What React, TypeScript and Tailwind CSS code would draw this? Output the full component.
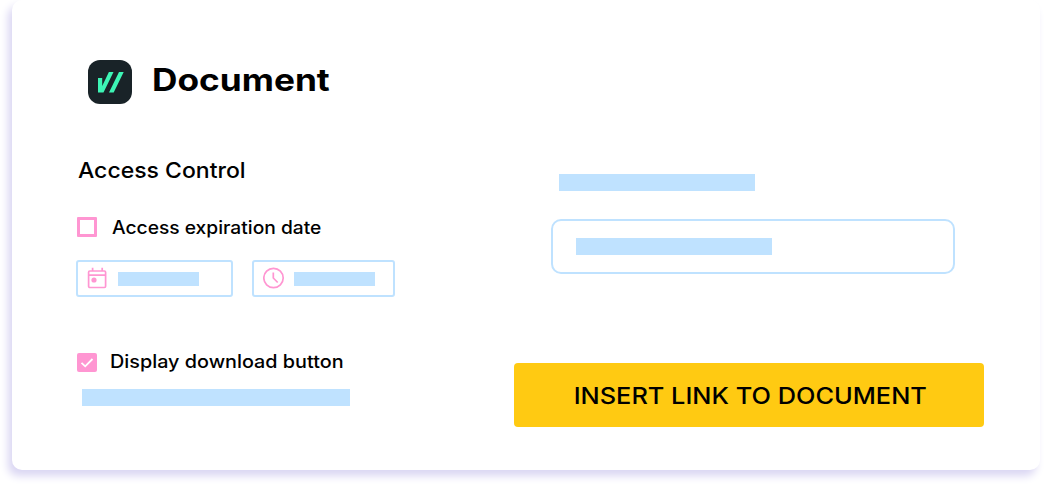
import React from 'react';

interface PlaceholderProps {
  className?: string;
}

const Placeholder: React.FC<PlaceholderProps> = ({ className = '' }) => (
  <div className={`bg-[#bfe2ff] ${className}`} />
);

const Logo: React.FC = () => (
  <svg className="w-11 h-11 shrink-0" viewBox="0 0 44 44" aria-hidden="true">
    <rect width="44" height="44" rx="12" fill="#192328" />
    <path d="M10 18H14.2V26L20.9 12H25.5L15.5 32.6H10ZM31 12H35.7L25.7 32.6H21Z" fill="#3df5b5" />
  </svg>
);

const CalendarIcon: React.FC = () => (
  <svg className="w-5 h-[22px] -mt-px shrink-0" viewBox="0 0 20 22" fill="none" stroke="#ff96d2" strokeWidth="1.7" aria-hidden="true">
    <rect x="1.6" y="4" width="17" height="16.5" rx="1.2" />
    <path d="M1.6 8.2H18.6M5.6 0.8V4M15.2 0.8V4" />
    <circle cx="7" cy="13" r="2.6" fill="#ff96d2" stroke="none" />
  </svg>
);

const ClockIcon: React.FC = () => (
  <svg className="w-[22px] h-[22px] -mt-px shrink-0" viewBox="0 0 22 22" fill="none" stroke="#ff96d2" strokeWidth="1.7" aria-hidden="true">
    <circle cx="10.5" cy="11" r="9.7" />
    <path d="M10.3 5.5V11L14.7 15.5" />
  </svg>
);

const CheckIcon: React.FC = () => (
  <svg className="w-5 h-5" viewBox="0 0 20 20" fill="none" stroke="#fff" strokeWidth="1.8" aria-hidden="true">
    <path d="M4.5 9.8L8.2 13.3L15.5 6" />
  </svg>
);

const AccessControl: React.FC = () => (
  <section className="w-[437px]">
    <header className="flex items-center h-11 mt-15 ml-[11px]">
      <Logo />
      <h1 className="ml-5 -mt-1 origin-left scale-x-[1.137] text-[31px] leading-10 font-bold whitespace-nowrap">Document</h1>
    </header>
    <h2 className="mt-[52px] ml-px h-7 w-fit origin-left scale-x-[1.045] text-[22px] leading-7 font-medium whitespace-nowrap">
      Access Control
    </h2>

    <div className="flex items-center mt-[33px] h-5">
      <div className="w-5 h-5 border-3 border-[#ff96d2] rounded-[1px]" />
      <span className="mt-0.5 ml-[15px] origin-left scale-x-[1.067] text-[18px] leading-5 font-medium whitespace-nowrap">
        Access expiration date
      </span>
    </div>

    <div className="flex mt-[23px] -ml-px gap-[19px]">
      <div className="flex items-center w-[157px] h-[37px] border-2 border-[#bfe2ff] rounded-[3px] pl-[9px]">
        <CalendarIcon />
        <Placeholder className="ml-[11px] w-[81px] h-3.5" />
      </div>
      <div className="flex items-center w-[143px] h-[37px] border-2 border-[#bfe2ff] rounded-[3px] pl-[9px]">
        <ClockIcon />
        <Placeholder className="ml-[9px] w-[81px] h-3.5" />
      </div>
    </div>

    <div className="flex items-center mt-[55px] h-5">
      <div className="w-5 h-[19px] bg-[#ff96d2] rounded-[2px]">
        <CheckIcon />
      </div>
      <span className="ml-[13px] origin-left scale-x-[1.1] text-[18px] leading-5 font-medium whitespace-nowrap">
        Display download button
      </span>
    </div>
    <Placeholder className="mt-[17px] ml-[5px] w-[268px] h-[17px]" />
  </section>
);

const InsertLink: React.FC = () => (
  <section className="w-[470px]">
    <Placeholder className="mt-[174px] ml-[45px] w-[196px] h-[17px]" />
    <div className="flex items-center mt-7 ml-[37px] w-[404px] h-[55px] border-2 border-[#bfe2ff] rounded-[10px] pl-[23px]">
      <Placeholder className="w-[196px] h-[17px]" />
    </div>
    <button className="flex items-center justify-center mt-[89px] w-[470px] h-16 rounded bg-[#ffca12] pt-0.5 pl-[3px] text-[23px] leading-8 font-medium whitespace-nowrap">
      <span className="scale-x-[1.102]">INSERT LINK TO DOCUMENT</span>
    </button>
  </section>
);

export default function App() {
  return (
    <main className="w-[1044px] h-[486px] overflow-hidden bg-white pl-3 text-black font-['Inter',sans-serif]">
      <div className="flex w-[1028px] h-[470px] pl-[65px] rounded-[10px] bg-white shadow-[-4px_6px_9px_#dad6f3]">
        <AccessControl />
        <InsertLink />
      </div>
    </main>
  );
}
